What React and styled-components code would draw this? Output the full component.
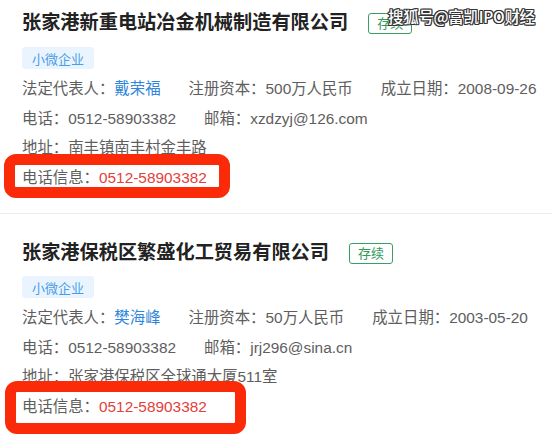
import React from "react";
import styled, { createGlobalStyle } from "styled-components";

const Global = createGlobalStyle`
  html, body { margin: 0; padding: 0; background: #fff; }
  body {
    font-family: "Liberation Sans", "Noto Sans CJK SC", sans-serif;
    -webkit-font-smoothing: antialiased;
  }
`;

const Page = styled.div`
  position: relative;
  width: 552px;
  height: 440px;
  overflow: hidden;
  background: #fff;
`;

const Card = styled.section`
  padding: ${(p) => (p.$first ? "9px" : "25px")} 22px ${(p) => (p.$first ? "21px" : "20px")};
  border-bottom: ${(p) => (p.$first ? "1px solid #ececec" : "none")};
`;

const TitleRow = styled.div`
  display: flex;
  align-items: center;
  height: 28px;
`;

const Title = styled.h2`
  margin: 0;
  font-size: 19.2px;
  font-weight: 700;
  color: #222;
  line-height: 28px;
  white-space: nowrap;
`;

const Status = styled.span`
  margin-left: 20px;
  display: inline-flex;
  align-items: center;
  height: 21px;
  box-sizing: border-box;
  padding: 0 8px;
  border: 1.5px solid #38a064;
  border-radius: 3px;
  color: #2f9a5a;
  font-size: 13px;
  line-height: 1;
`;

const Tag = styled.span`
  display: inline-flex;
  align-items: center;
  margin-top: ${(p) => (p.$first ? "10px" : "9px")};
  margin-bottom: 5px;
  height: 22px;
  padding: 0 10px;
  background: #eaf4fe;
  border-radius: 3px;
  color: #4a9de8;
  font-size: 13px;
`;

const Row = styled.div`
  position: relative;
  display: flex;
  gap: 28px;
  height: 29.5px;
  line-height: 29.5px;
  font-size: 15.4px;
  color: #5e5e5e;
  white-space: nowrap;
`;

const Field = styled.span``;

const Value = styled.span`
  color: ${(p) => (p.$tone === "blue" ? "#2f86dc" : p.$tone === "red" ? "#e5403a" : "inherit")};
`;

const Highlight = styled.span`
  position: absolute;
  top: ${(p) => p.$top}px;
  bottom: ${(p) => p.$bottom}px;
  left: ${(p) => p.$left}px;
  width: ${(p) => p.$width}px;
  border: 11px solid #fb2a08;
  border-radius: 12px;
  box-sizing: border-box;
  pointer-events: none;
`;

const Watermark = styled.div`
  position: absolute;
  top: 5px;
  left: 388px;
  font-family: "Noto Sans CJK SC", sans-serif;
  font-size: 15.5px;
  font-weight: 500;
  color: #fff;
  letter-spacing: -0.3px;
  text-shadow:
    1px 0 0 #333, -1px 0 0 #333, 0 1px 0 #333, 0 -1px 0 #333,
    1px 1px 0 #333, -1px -1px 0 #333, 1px -1px 0 #333, -1px 1px 0 #333;
  white-space: nowrap;
`;

const companies = [
  {
    name: "张家港新重电站冶金机械制造有限公司",
    rep: "戴荣福",
    capital: "500万人民币",
    date: "2008-09-26",
    phone: "0512-58903382",
    email: "xzdzyj@126.com",
    address: "南丰镇南丰村金丰路",
    box: { top: -9, bottom: -6, left: -18, width: 226 },
  },
  {
    name: "张家港保税区繁盛化工贸易有限公司",
    rep: "樊海峰",
    capital: "50万人民币",
    date: "2003-05-20",
    phone: "0512-58903382",
    email: "jrj296@sina.cn",
    address: "张家港保税区全球通大厦511室",
    box: { top: -11, bottom: -13, left: -17, width: 241 },
  },
];

export default function App() {
  return (
    <>
      <Global />
      <Page>
        {companies.map((c, i) => (
          <Card key={c.name} $first={i === 0}>
            <TitleRow>
              <Title>{c.name}</Title>
              <Status>存续</Status>
            </TitleRow>
            <Tag $first={i === 0}>小微企业</Tag>
            <Row>
              <Field>
                法定代表人：<Value $tone="blue">{c.rep}</Value>
              </Field>
              <Field>注册资本：{c.capital}</Field>
              <Field>成立日期：{c.date}</Field>
            </Row>
            <Row>
              <Field>电话：{c.phone}</Field>
              <Field>邮箱：{c.email}</Field>
            </Row>
            <Row>
              <Field>地址：{c.address}</Field>
            </Row>
            <Row>
              <Field>
                电话信息：<Value $tone="red">{c.phone}</Value>
              </Field>
              <Highlight
                $top={c.box.top}
                $bottom={c.box.bottom}
                $left={c.box.left}
                $width={c.box.width}
              />
            </Row>
          </Card>
        ))}
        <Watermark>搜狐号@富凯IPO财经</Watermark>
      </Page>
    </>
  );
}
